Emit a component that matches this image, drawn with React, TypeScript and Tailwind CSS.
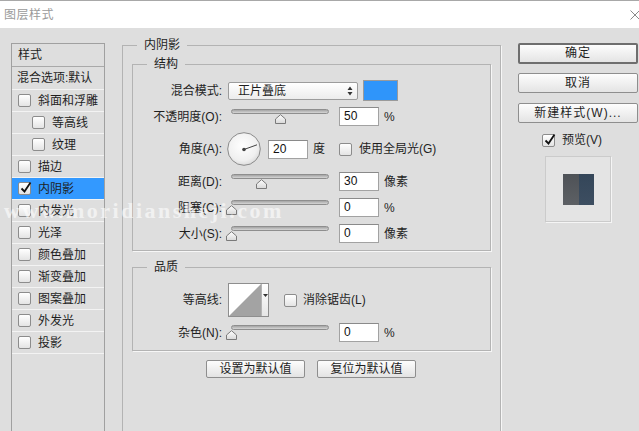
import React from "react";

function Check({ checked = false }: { checked?: boolean }) {
  return (
    <div className="relative w-[13px] h-[13px] shrink-0 border border-[#8c8c8c] rounded-[2px] bg-gradient-to-b from-[#ffffff] to-[#e4e4e4]">
      {checked && (
        <svg className="absolute left-[1px] top-[-2px]" width="12" height="13" viewBox="0 0 12 13">
          <path d="M1.5 7.5 L4.5 10.5 L10.5 1.5" fill="none" stroke="#111" strokeWidth="1.8" />
        </svg>
      )}
    </div>
  );
}

function Field({ value }: { value: string }) {
  return (
    <div className="w-[40px] h-[19px] shrink-0 border border-[#a2a2a2] border-t-[#8a8a8a] bg-white pl-[4px] text-[12px] leading-[17px] text-[#111]">
      {value}
    </div>
  );
}

function Slider({ pct }: { pct: number }) {
  return (
    <div className="relative w-[104px] h-[19px] shrink-0">
      <div className="mt-[4px] mx-[3px] h-[5px] rounded-full border border-[#8e8e8e] bg-gradient-to-b from-[#a4a4a4] to-[#d6d6d6]" />
      <svg
        className="absolute top-[5px]"
        style={{ left: `${3 + pct * 0.98 - 5.5}px` }}
        width="11"
        height="10"
        viewBox="0 0 11 10"
      >
        <defs>
          <linearGradient id="tg" x1="0" y1="0" x2="0" y2="1">
            <stop offset="0" stopColor="#ffffff" />
            <stop offset="1" stopColor="#d8d8d8" />
          </linearGradient>
        </defs>
        <path d="M0.5 9.5 L0.5 5 L5.5 0.7 L10.5 5 L10.5 9.5 Z" fill="url(#tg)" stroke="#7a7a7a" strokeWidth="1" />
      </svg>
    </div>
  );
}

function Label({ children }: { children: React.ReactNode }) {
  return <div className="w-[88px] shrink-0 text-right text-[12px] leading-[16px]">{children}</div>;
}

function Row({ children, className }: { children: React.ReactNode; className: string }) {
  return <div className={"flex items-center " + className}>{children}</div>;
}

function Group({ title, children, className }: { title: string; children: React.ReactNode; className?: string }) {
  return (
    <fieldset className={"border border-[#b3b3b3] shadow-[1px_1px_0_#f6f6f6] " + (className || "")}>
      <legend className="ml-[14px] px-[7px] text-[12px] leading-[16px] h-[16px]">{title}</legend>
      {children}
    </fieldset>
  );
}

const listItems: { label: string; sub?: boolean; checked?: boolean; selected?: boolean }[] = [
  { label: "斜面和浮雕" },
  { label: "等高线", sub: true },
  { label: "纹理", sub: true },
  { label: "描边" },
  { label: "内阴影", checked: true, selected: true },
  { label: "内发光" },
  { label: "光泽" },
  { label: "颜色叠加" },
  { label: "渐变叠加" },
  { label: "图案叠加" },
  { label: "外发光" },
  { label: "投影" },
];

function BtnSmall({ children }: { children: React.ReactNode }) {
  return (
    <div className="w-[99px] h-[18px] border border-[#8e8e8e] rounded-[2px] bg-gradient-to-b from-[#fdfdfd] to-[#e3e3e3] text-center text-[12px] leading-[16px]">
      {children}
    </div>
  );
}

export default function App() {
  return (
    <div className="relative w-[639px] h-[431px] overflow-hidden bg-[#dedede] text-[#1e1e1e] font-['Liberation_Sans','Noto_Sans_CJK_SC',sans-serif]">
      {/* title bar */}
      <div className="h-[28px] bg-white border-t border-[#a8a8a8] flex items-center justify-between">
        <div className="pl-[4px] text-[12px] tracking-[0.5px] text-[#9a9a9a] leading-[16px]">图层样式</div>
        <svg width="10" height="10" viewBox="0 0 10 10" className="mr-[-1px]">
          <path d="M0.5 0.5 L9.5 9.5 M9.5 0.5 L0.5 9.5" stroke="#8a8a8a" strokeWidth="1" />
        </svg>
      </div>

      <div className="flex">
        {/* left list */}
        <div className="ml-[11px] mt-[15px] w-[94px] h-[420px] shrink-0 border border-[#a0a0a0] flex flex-col text-[12px] leading-[16px]">
          <div className="h-[23px] border-b border-[#a9a9a9] pl-[6px] flex items-center">样式</div>
          <div className="h-[23px] border-b border-[#f3f3f3] pl-[5px] flex items-center">混合选项:默认</div>
          {listItems.map((it) => (
            <div
              key={it.label}
              className={
                "h-[22px] border-b border-[#f3f3f3] flex items-center " +
                (it.sub ? "pl-[20px] " : "pl-[6px] ") +
                (it.selected ? "bg-[#3399ff]" : "")
              }
            >
              <Check checked={it.checked} />
              <span className="ml-[7px]">{it.label}</span>
            </div>
          ))}
        </div>

        {/* main group */}
        <Group title="内阴影" className="ml-[17px] mt-[9px] w-[379px] h-[440px] shrink-0">
          <div className="px-[9px]">
            <Group title="结构" className="mt-[3px]">
              <div className="pt-[8px] pb-[7px] pl-[1px]">
                <Row className="h-[21px]">
                  <Label>混合模式:</Label>
                  <div className="ml-[6px] w-[130px] h-[18px] border border-[#9c9c9c] rounded-[2px] bg-gradient-to-b from-[#ffffff] to-[#ececec] flex items-center pl-[9px] pr-[4px] justify-between text-[12px] leading-[16px]">
                    <span>正片叠底</span>
                    <svg width="6" height="10" viewBox="0 0 6 10">
                      <path d="M3 0.5 L5.5 4 L0.5 4 Z M3 9.5 L5.5 6 L0.5 6 Z" fill="#333" />
                    </svg>
                  </div>
                  <div className="ml-[5px] w-[35px] h-[21px] border border-[#9a9a9a] bg-[#2f95fa]" />
                </Row>
                <Row className="mt-[6px] h-[19px]">
                  <Label>不透明度(O):</Label>
                  <div className="ml-[6px]"><Slider pct={50} /></div>
                  <div className="ml-[7px]"><Field value="50" /></div>
                  <span className="ml-[5px] text-[12px]">%</span>
                </Row>
                <Row className="mt-[6px] h-[34px]">
                  <Label>角度(A):</Label>
                  <svg className="ml-[5px] shrink-0" width="34" height="34" viewBox="0 0 34 34">
                    <defs>
                      <radialGradient id="dial" cx="0.45" cy="0.4" r="0.65">
                        <stop offset="0" stopColor="#ffffff" />
                        <stop offset="0.7" stopColor="#f0f0f0" />
                        <stop offset="1" stopColor="#d6d6d6" />
                      </radialGradient>
                    </defs>
                    <circle cx="17" cy="17" r="16.3" fill="url(#dial)" stroke="#8a8a8a" strokeWidth="1" />
                    <line x1="17" y1="17.5" x2="30" y2="12.8" stroke="#444" strokeWidth="1" />
                    <circle cx="17" cy="17.5" r="1.8" fill="#444" />
                  </svg>
                  <div className="ml-[7px]"><Field value="20" /></div>
                  <span className="ml-[5px] text-[12px]">度</span>
                  <div className="ml-[14px]"><Check /></div>
                  <span className="ml-[7px] text-[12px]">使用全局光(G)</span>
                </Row>
                <Row className="mt-[6px] h-[19px]">
                  <Label>距离(D):</Label>
                  <div className="ml-[6px]"><Slider pct={31.6} /></div>
                  <div className="ml-[7px]"><Field value="30" /></div>
                  <span className="ml-[5px] text-[12px]">像素</span>
                </Row>
                <Row className="mt-[7px] h-[19px]">
                  <Label>阻塞(C):</Label>
                  <div className="ml-[6px]"><Slider pct={0} /></div>
                  <div className="ml-[7px]"><Field value="0" /></div>
                  <span className="ml-[5px] text-[12px]">%</span>
                </Row>
                <Row className="mt-[7px] h-[19px]">
                  <Label>大小(S):</Label>
                  <div className="ml-[6px]"><Slider pct={0} /></div>
                  <div className="ml-[7px]"><Field value="0" /></div>
                  <span className="ml-[5px] text-[12px]">像素</span>
                </Row>
              </div>
            </Group>

            <Group title="品质" className="mt-[8px]">
              <div className="pt-[8px] pb-[8px] pl-[1px]">
                <Row className="h-[34px]">
                  <Label>等高线:</Label>
                  <div className="ml-[6px] w-[41px] h-[34px] border border-[#8e8e8e] flex bg-white">
                    <svg width="32" height="32" viewBox="0 0 32 32" className="shrink-0">
                      <path d="M0 32 L32 0 L32 32 Z" fill="#a3a3a3" />
                    </svg>
                    <div className="flex-1 border-l border-[#b5b5b5] bg-gradient-to-b from-[#ffffff] to-[#e6e6e6] flex justify-center pt-[10px]">
                      <svg width="5" height="3" viewBox="0 0 5 3">
                        <path d="M0 0 L5 0 L2.5 3 Z" fill="#333" />
                      </svg>
                    </div>
                  </div>
                  <div className="ml-[15px]"><Check /></div>
                  <span className="ml-[6px] text-[12px]">消除锯齿(L)</span>
                </Row>
                <Row className="mt-[6px] h-[19px]">
                  <Label>杂色(N):</Label>
                  <div className="ml-[6px]"><Slider pct={0} /></div>
                  <div className="ml-[7px]"><Field value="0" /></div>
                  <span className="ml-[5px] text-[12px]">%</span>
                </Row>
              </div>
            </Group>

            <div className="mt-[9px] pl-[74px] flex gap-[12px]">
              <BtnSmall>设置为默认值</BtnSmall>
              <BtnSmall>复位为默认值</BtnSmall>
            </div>
          </div>
        </Group>

        {/* right column */}
        <div className="ml-[17px] mt-[15px] w-[120px] shrink-0 flex flex-col text-[12px]">
          <div className="h-[21px] border-2 border-[#6e6e6e] rounded-[2px] bg-gradient-to-b from-[#fdfdfd] to-[#e4e4e4] text-center leading-[17px] tracking-[1px]">
            确定
          </div>
          <div className="mt-[9px] h-[20px] border border-[#8e8e8e] rounded-[2px] bg-gradient-to-b from-[#fdfdfd] to-[#e4e4e4] text-center leading-[18px] tracking-[1px]">
            取消
          </div>
          <div className="mt-[10px] h-[20px] border border-[#8e8e8e] rounded-[2px] bg-gradient-to-b from-[#fdfdfd] to-[#e4e4e4] text-center leading-[18px] tracking-[1px]">
            新建样式(W)...
          </div>
          <div className="mt-[10px] h-[14px] pl-[24px] flex items-center">
            <Check checked />
            <span className="ml-[7px] leading-[16px]">预览(V)</span>
          </div>
          <div className="mt-[9px] ml-[27px] w-[66px] h-[66px] border border-[#cbcbcb] bg-[#e4e4e4] shadow-[1px_1px_0_#f5f5f5] flex items-center justify-center">
            <div className="w-[31px] h-[31px] flex">
              <div className="w-[16px] bg-gradient-to-b from-[#4e5257] to-[#5d6064]" />
              <div className="flex-1 bg-gradient-to-b from-[#344659] to-[#3d4e61]" />
            </div>
          </div>
        </div>
      </div>

      {/* watermark */}
      <div className="absolute left-[4px] top-[198px] text-[22px] leading-[26px] font-bold tracking-[2.5px] text-white/60 font-['Liberation_Serif',serif] pointer-events-none whitespace-nowrap">
        www.moridiansheji.com
      </div>
    </div>
  );
}
